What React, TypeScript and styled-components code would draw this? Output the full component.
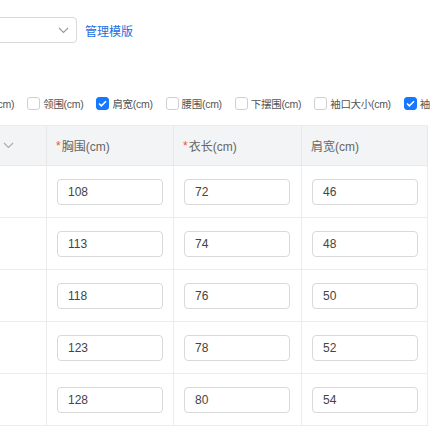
import styled, { createGlobalStyle } from "styled-components";

const GlobalStyle = createGlobalStyle`
  html, body {
    margin: 0;
    padding: 0;
    background: #fff;
    overflow: hidden;
  }
  body {
    font-family: "Liberation Sans", "Noto Sans CJK SC", sans-serif;
    color: #333;
  }
`;

const Page = styled.div`
  width: 430px;
  height: 430px;
  padding-top: 17px;
  box-sizing: border-box;
  overflow: hidden;
`;

const Toolbar = styled.div`
  display: flex;
  align-items: center;
  gap: 8px;
  margin-left: -123px;
  height: 26px;
`;

const Select = styled.div`
  width: 200px;
  height: 26px;
  box-sizing: border-box;
  border: 1px solid #d9d9d9;
  border-radius: 4px;
  display: flex;
  align-items: center;
  justify-content: flex-end;
  padding-right: 7px;
  color: #999;
`;

const LinkText = styled.span`
  font-size: 12px;
  color: #1a6fe0;
  cursor: pointer;
`;

const CheckRow = styled.div`
  display: flex;
  align-items: center;
  gap: 13px;
  margin-top: 50px;
  margin-left: -42px;
  height: 20px;
  white-space: nowrap;
`;

const CheckItem = styled.label`
  display: flex;
  align-items: center;
  gap: 3px;
  font-size: 10.5px;
  letter-spacing: -0.3px;
  color: #555;
  flex-shrink: 0;
`;

const Box = styled.span<{ $on?: boolean }>`
  width: 13px;
  height: 13px;
  box-sizing: border-box;
  border-radius: 3px;
  border: 1px solid ${(p) => (p.$on ? "#1677ff" : "#cfcfcf")};
  background: ${(p) => (p.$on ? "#1677ff" : "#fff")};
  display: flex;
  align-items: center;
  justify-content: center;
  flex-shrink: 0;
`;

const Table = styled.div`
  margin-top: 12px;
  margin-left: -73px;
  display: grid;
  grid-template-columns: 120px 127px 128px 126px;
  border-top: 1px solid #ececec;
  width: 501px;
`;

const HeadCell = styled.div<{ $end?: boolean }>`
  height: 39px;
  background: #f3f4f5;
  border-bottom: 1px solid #e8e8e8;
  border-right: 1px solid #e8e8e8;
  display: flex;
  align-items: center;
  justify-content: ${(p) => (p.$end ? "flex-end" : "flex-start")};
  padding: ${(p) => (p.$end ? "0 32px 0 0" : "0 0 0 9px")};
  font-size: 12px;
  color: #666;
`;

const Star = styled.span`
  color: #f5522d;
  margin-right: 1px;
`;

const Cell = styled.div`
  height: 51px;
  border-bottom: 1px solid #ececec;
  border-right: 1px solid #ececec;
  display: flex;
  align-items: center;
  padding-left: 10px;
`;

const Input = styled.div`
  width: 106px;
  height: 26px;
  box-sizing: border-box;
  border: 1px solid #d9d9d9;
  border-radius: 4px;
  display: flex;
  align-items: center;
  padding-left: 10px;
  font-size: 12px;
  color: #444;
`;

const Chevron = ({ color = "#999" }: { color?: string }) => (
  <svg width="11" height="7" viewBox="0 0 11 7" fill="none">
    <path d="M1 1l4.5 4.5L10 1" stroke={color} strokeWidth="1.1" />
  </svg>
);

const Tick = () => (
  <svg width="9" height="7" viewBox="0 0 9 7" fill="none">
    <path d="M1 3.5l2.3 2.3L8 1.2" stroke="#fff" strokeWidth="1.6" />
  </svg>
);

const options = [
  { label: "衣长(cm)", on: false },
  { label: "领围(cm)", on: false },
  { label: "肩宽(cm)", on: true },
  { label: "腰围(cm)", on: false },
  { label: "下摆围(cm)", on: false },
  { label: "袖口大小(cm)", on: false },
  { label: "袖长(cm)", on: true },
];

const rows = [
  ["108", "72", "46"],
  ["113", "74", "48"],
  ["118", "76", "50"],
  ["123", "78", "52"],
  ["128", "80", "54"],
];

export default function App() {
  return (
    <Page>
      <GlobalStyle />
      <Toolbar>
        <Select>
          <Chevron />
        </Select>
        <LinkText>管理模版</LinkText>
      </Toolbar>

      <CheckRow>
        {options.map((o) => (
          <CheckItem key={o.label}>
            <Box $on={o.on}>{o.on && <Tick />}</Box>
            {o.label}
          </CheckItem>
        ))}
      </CheckRow>

      <Table>
        <HeadCell $end>
          <Chevron color="#aaa" />
        </HeadCell>
        <HeadCell>
          <Star>*</Star>胸围(cm)
        </HeadCell>
        <HeadCell>
          <Star>*</Star>衣长(cm)
        </HeadCell>
        <HeadCell>肩宽(cm)</HeadCell>
        {rows.map((r, i) => [
          <Cell key={`s${i}`} />,
          ...r.map((v, j) => (
            <Cell key={`${i}-${j}`}>
              <Input>{v}</Input>
            </Cell>
          )),
        ])}
      </Table>
    </Page>
  );
}
